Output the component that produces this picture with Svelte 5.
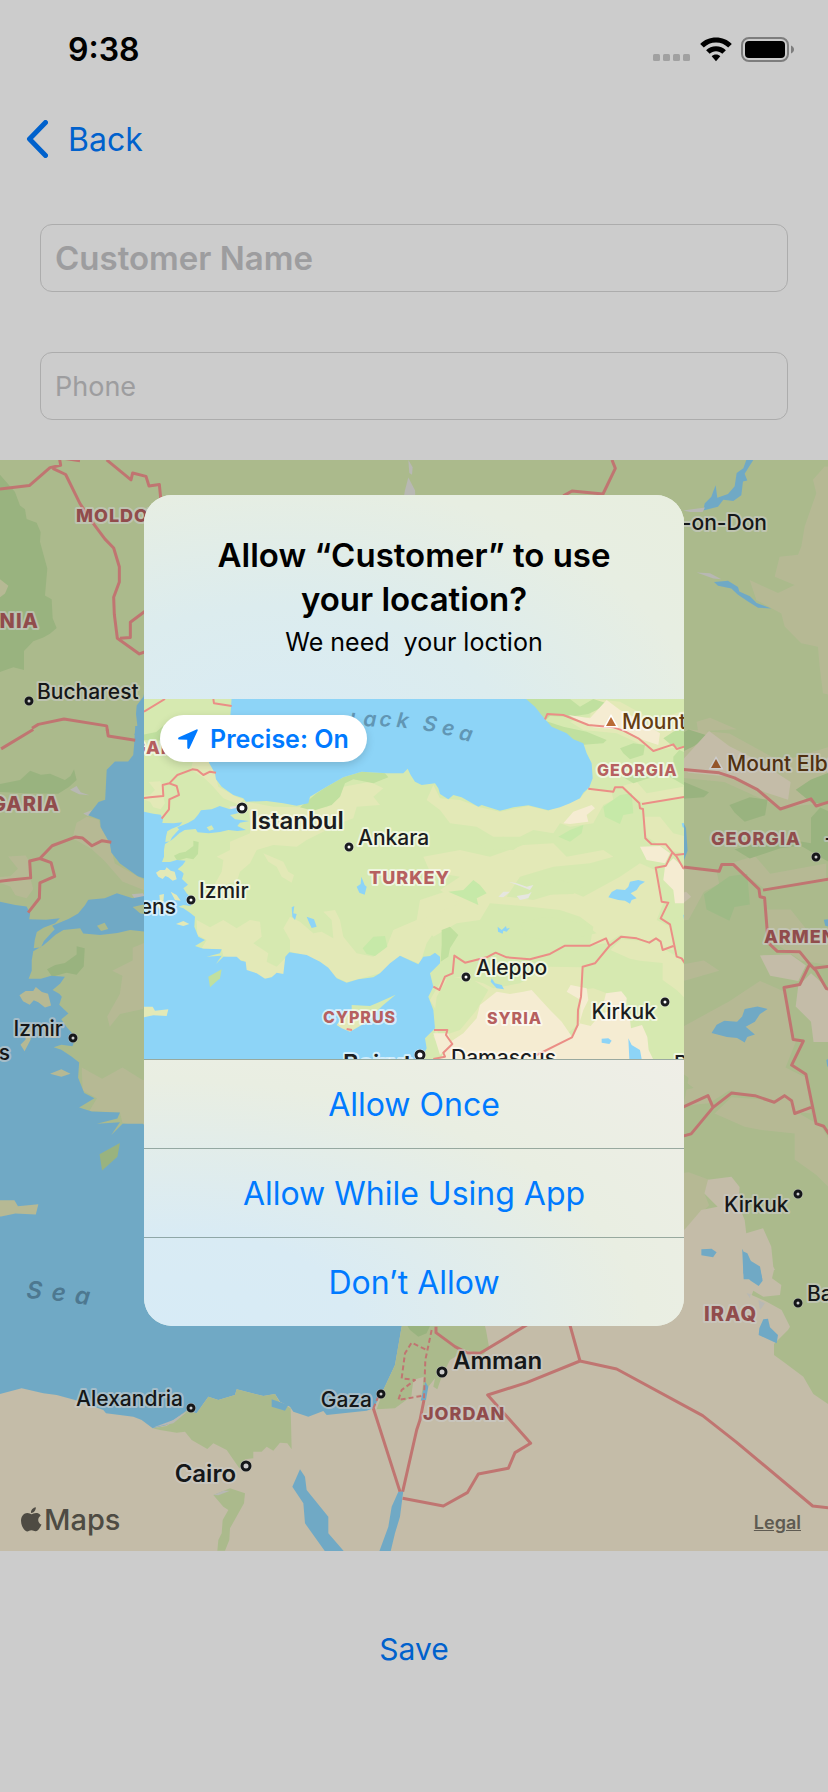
<script>
  let customer = $state('');
  let phone = $state('');

  const mapLabels = [
    { t: 'MOLDOVA', x: 76, y: 62, c: 'country' },
    { t: 'ROMANIA', x: 39, y: 168, c: 'country big end' },
    { t: 'BULGARIA', x: 60, y: 351, c: 'country big end' },
    { t: 'GEORGIA', x: 711, y: 385, c: 'country' },
    { t: 'ARMENIA', x: 764, y: 483, c: 'country' },
    { t: 'IRAQ', x: 704, y: 861, c: 'country big' },
    { t: 'JORDAN', x: 423, y: 960, c: 'country' },
    { t: 'Rostov-on-Don', x: 767, y: 70, c: 'city end' },
    { t: 'Bucharest', x: 37, y: 239, c: 'city', dot: [29, 241] },
    { t: 'Izmir', x: 63, y: 576, c: 'city end', dot: [73, 578] },
    { t: 'Athens', x: 10, y: 600, c: 'city end' },
    { t: 'Mount Elbrus', x: 727, y: 311, c: 'city peak', tri: [716, 304] },
    { t: 'Tbilisi', x: 825, y: 394, c: 'city', dot: [816, 397] },
    { t: 'Kirkuk', x: 724, y: 752, c: 'city', dot: [798, 734] },
    { t: 'Baghdad', x: 807, y: 841, c: 'city', dot: [798, 843] },
    { t: 'Alexandria', x: 183, y: 946, c: 'city end', dot: [191, 948] },
    { t: 'Gaza', x: 372, y: 947, c: 'city end', dot: [381, 934] },
    { t: 'Cairo', x: 236, y: 1022, c: 'city capital end', dot: [246, 1006, 4] },
    { t: 'Amman', x: 453, y: 909, c: 'city capital', dot: [442, 912, 4] }
  ];

  const previewLabels = [
    { t: 'GARIA', x: -12, y: 55, c: 'country' },
    { t: 'TURKEY', x: 225, y: 185, c: 'country' },
    { t: 'GEORGIA', x: 453, y: 77, c: 'country small' },
    { t: 'CYPRUS', x: 179, y: 324, c: 'country small' },
    { t: 'SYRIA', x: 343, y: 325, c: 'country small' },
    { t: 'Istanbul', x: 107, y: 130, c: 'city capital', dot: [98, 109, 4] },
    { t: 'Ankara', x: 214, y: 146, c: 'city', dot: [205, 148] },
    { t: 'Izmir', x: 55, y: 199, c: 'city', dot: [47, 201] },
    { t: 'Athens', x: 32, y: 215, c: 'city end' },
    { t: 'Aleppo', x: 332, y: 276, c: 'city', dot: [322, 278] },
    { t: 'Kirkuk', x: 512, y: 320, c: 'city end', dot: [521, 303] },
    { t: 'Mount', x: 478, y: 30, c: 'city peak', tri: [467, 23] },
    { t: 'Beirut', x: 199, y: 373, c: 'city capital', dot: [276, 356, 4] },
    { t: 'Damascus', x: 307, y: 366, c: 'city' },
    { t: 'Baghdad', x: 530, y: 372, c: 'city' }
  ];
</script>

{#snippet labels(list)}
  {#each list as l}
    <text class={l.c} x={l.x} y={l.y}>{l.t}</text>
    {#if l.dot}
      <circle class="dot-halo" cx={l.dot[0]} cy={l.dot[1]} r={(l.dot[2] ?? 3) + 2} />
      <circle class="dot" cx={l.dot[0]} cy={l.dot[1]} r={l.dot[2] ?? 3} />
    {/if}
    {#if l.tri}
      <path class="tri" d="M{l.tri[0]} {l.tri[1] - 5}l5 9h-10z" />
    {/if}
  {/each}
{/snippet}

<!-- Anatolia and its neighbours, three units to a preview pixel -->
{#snippet anatolia()}
  <path class="land" d="M-10 25H1650V1110H-10z" />
  <path class="forest" d="M-10 138 49 126 69 108 90 116 108 114 137 126 148 118 155 105 160 126 145 140 124 153 60 152 -10 149z" />
  <path class="dry" d="M26 276 60 274 70 290 69 318 75 340 62 358 40 352 30 335 10 328 -10 322V318L30 315 45 300zM160 210 180 198 203 204 207 218 225 250 235 290 292 322 310 328 300 345 250 325 215 285 190 262 152 240z" />
  <path class="urban" d="M147 145 160 138 168 150 185 156 165 154zM173 192 190 185 183 197zM268 350 290 348 296 358 275 360z" />
  <!-- highlands -->
  <path class="dry" d="M320 335 400 350 490 352 560 352 600 320 610 290 690 275 730 295 700 320 720 345 650 350 640 385 600 400 560 420 500 450 470 470 400 465 350 480 330 520 300 545 290 575 245 585 225 610 220 590 245 545 250 510 230 500 270 480 270 455 330 430 330 390zM370 490 430 515 445 545 462 555 455 578 425 560 410 530 385 515z" />
  <path class="dry" d="M170 690 210 712 250 690 290 715 330 690 360 695 365 740 340 760 385 790 380 815 410 830 440 800 435 850 375 866 320 842 312 812 250 798 245 778 185 775 200 750 172 735z" />
  <path class="dry" d="M430 715 450 680 480 695 520 730 545 725 580 745 575 690 550 665 585 660 600 690 610 740 650 790 700 800 740 770 760 720 830 690 840 630 930 600 1010 640 990 660 900 690 880 730 860 760 840 822 780 797 720 850 620 877 585 860 540 815 480 792 450 785 450 750z" />
  <path class="dry" d="M880 285 900 325 960 330 1020 352 1080 365 1165 348 1225 362 1320 325 1345 296 1415 305 1420 330 1390 345 1360 400 1290 410 1260 400 1240 430 1180 420 1140 440 1060 440 1010 410 930 400 900 360 860 330z" />
  <path class="dry" d="M850 500 960 480 1050 500 1150 465 1240 460 1280 500 1390 480 1420 500 1350 520 1240 530 1140 560 1100 620 1180 630 1280 600 1330 620 1440 560 1500 520 1545 540 1570 640 1550 690 1590 710 1600 780 1555 775 1510 750 1440 735 1400 760 1350 765 1360 710 1320 680 1260 660 1170 650 1050 640 1020 690 950 700 880 740 840 690 960 640 900 600 960 560 870 545z" />
  <path class="land" d="M1010 455 1090 440 1150 460 1120 480 1040 478zM1170 600 1260 570 1330 590 1300 612 1200 615zM1140 700 1220 680 1330 700 1370 730 1250 755 1160 740z" />
  <path class="dry" d="M1360 27 1440 35 1540 90 1640 60 1640 170 1540 180 1430 130 1330 120 1290 95 1350 80zM1440 290 1490 275 1520 310 1630 290 1630 325 1510 340zM1510 380 1560 380 1600 430 1640 440 1640 490 1580 480 1520 440z" />
  <path class="forest" d="M1155 27H1290L1320 50 1360 27 1400 40 1370 60 1345 72 1290 80 1230 78 1215 92 1270 110 1340 125 1400 150 1390 160 1320 165 1240 120 1205 92zM1440 175 1480 160 1515 165 1510 195 1470 208 1450 190zM1570 145 1600 125 1640 110V175L1600 170zM1600 200 1618 180 1640 190V290L1580 255 1540 260 1480 280 1450 262 1540 240 1600 250z" />
  <path class="cream" d="M1285 75 1350 85 1400 30 1440 60 1490 85 1560 130 1555 165 1510 150 1450 120 1360 112z" />
  <path class="forest" d="M480 352 530 310 560 290 610 262 665 245 735 250 745 262 700 280 640 268 615 280 600 320 575 345 520 362zM102 497 118 489 137 485 160 468 160 452 176 456 174 492 160 508 140 504 112 512zM905 720 930 710 955 735 930 775 925 800 902 815 905 765z" />
  <path class="mint" d="M668 775 700 740 735 738 742 770 705 798 680 792zM925 605 970 600 1000 570 1020 585 1040 610 1010 625 1015 645 960 620zM1390 350 1440 315 1475 310 1480 370 1450 375 1440 402 1395 380zM1255 440 1290 420 1330 405 1325 430 1290 455z" />
  <path class="cream" d="M1270 400 1300 365 1355 345 1365 355 1340 375 1345 395 1290 402zM1500 470 1560 468 1590 490 1575 520 1520 510zM1575 530 1600 505 1640 540V640L1605 640 1600 600 1570 570z" />
  <!-- steppe and desert -->
  <path class="dry" d="M905 870 960 860 1030 880 1060 895 1140 880 1230 830 1325 832 1320 1000 1220 1080 920 1107 880 1040 900 980 870 930zM1320 900 1360 895 1400 910 1391 937 1400 960 1360 1000 1350 1060 1320 1107zM1411 780 1444 748 1500 752 1560 770 1620 805 1640 840V930L1610 900 1568 870V819L1500 812 1470 806z" />
  <path class="land" d="M925 860 1000 870 1045 900 1010 960 960 1020 900 1040 880 1000 890 920zM1590 700 1610 680 1640 700V800L1620 790z" />
  <path class="cream" d="M900 1110 925 1060 970 1030 1010 985 1020 945 1070 905 1110 912 1150 905 1175 900 1230 960 1265 995 1296 1040 1320 1000 1322 930 1280 905 1292 885 1340 895 1345 930 1330 960 1318 1000 1352 1008 1385 969 1417 963 1391 937 1398 910 1444 904 1460 924 1458 960 1470 989 1473 1015 1506 1005 1522 1041 1526 1080 1542 1113zM880 1030 925 1030 935 1062 900 1095z" />
  <!-- seas -->
  <path class="water" d="M275 20 273 54 271 77 261 90 235 90 219 106 216 165 203 169 183 195 206 204 207 218 225 250 228 268 245 290 280 315 310 325 318 335 380 333 430 340 470 347 505 340 510 320 560 290 610 262 665 245 740 250 790 250 803 236 812 255 825 275 845 285 885 280 895 295 900 312 925 328 940 315 965 322 1015 350 1025 345 1080 362 1120 352 1165 346 1225 361 1260 352 1290 340 1320 325 1330 308 1348 292 1358 265 1355 220 1340 190 1330 160 1300 148 1280 130 1235 110 1210 82 1185 50 1150 20z" />
  <path class="water" d="M300 352 270 358 239 348 215 358 183 361 176 372 163 388 145 398 131 404 112 412 118 420 134 420 167 417 173 427 206 430 240 426 265 420 292 423 318 420 292 408 300 398 328 393 285 388 270 375 300 368z" />
  <path class="water" d="M-10 365 10 365 40 371 62 374 69 388 67 399 100 400 127 397 118 407 95 416 82 424 78 440 76 456 90 454 96 442 112 424 124 412 134 420 118 430 105 442 95 450 75 462 72 480 72 500 66 516 90 516 110 510 137 512 128 525 113 538 126 545 131 551 126 567 144 584 130 595 140 610 158 630 152 648 130 645 115 650 130 655 150 668 165 680 163 710 175 740 195 750 165 768 190 776 245 778 240 790 200 800 245 797 228 822 250 800 290 800 303 812 317 815 320 840 350 850 375 866 395 862 410 848 430 852 436 800 448 787 500 795 540 815 565 833 590 865 620 878 655 868 700 862 720 850 750 820 780 797 835 823 850 800 870 798 885 788 900 800 900 820 870 850 880 890 865 920 880 960 885 1015 855 1045 860 1075 840 1115H-10z" />
  <path class="dry" d="M48 548 60 540 75 540 80 532 92 542 104 545 110 568 98 572 85 562 76 558 68 567 55 560zM92 605 110 615 122 632 105 630zM58 615 72 612 70 635 58 658 50 645 60 635zM108 702 130 693 148 702 130 708zM-10 950 38 950 45 962 85 958 80 978 40 976 12 982 -10 980zM590 1005 605 985 635 962 690 950 700 965 690 990 660 1008 630 1025 605 1015z" />
  <path class="land" d="M200 412 215 406 222 418 208 422zM605 985 635 962V945L690 948 720 935 767 914 730 945 705 968 680 970 640 975z" />
  <path class="forest" d="M205 860 245 838 240 865 210 892z" />
  <path class="water" d="M650 590 662 582 664 560 674 585 680 590 674 614 658 608zM455 652 463 648 460 670 470 672 465 690 457 680zM500 680 522 688 530 710 515 714 508 700zM1405 622 1415 606 1430 598 1455 600 1465 590 1470 575 1495 570 1515 575 1500 585 1490 600 1472 610 1490 625 1475 630 1470 641 1455 632 1435 630zM1073 710 1085 720 1098 708 1100 716 1110 713 1100 725 1090 722 1088 731 1074 725zM1055 865 1065 880 1085 885 1092 898 1070 895 1052 875zM1385 1046 1405 1045 1415 1052 1408 1062 1385 1058zM1465 1045 1475 1065 1500 1080 1505 1107 1468 1107zM1625 400 1640 398V415L1628 412zM1630 675 1640 670V690L1632 688z" />
  <path class="urban" d="M1075 620 1090 605 1110 605 1090 622zM1105 575 1130 580 1160 590 1180 585 1170 600 1140 588zM1130 618 1165 612 1175 605 1165 625 1140 630z" />
  <g class="borders">
    <path d="M12 65 75 27M220 27 222 40 275 48M-10 327 30 322 70 318 68 285 88 280 112 255 157 238 172 240 190 255 210 245 228 248M88 280 110 288 117 315 88 328 87 358 65 386" />
    <path d="M1215 88 1222 72 1270 75 1345 105 1420 112 1450 122 1495 145 1540 183 1600 163 1610 177 1645 166M1345 296 1420 305 1425 292 1448 292 1498 340 1500 355 1509 357 1516 445 1534 462 1578 463 1600 490 1610 500 1630 535 1650 540M1506 342 1650 318M1605 495 1650 490" />
    <path d="M1597 488 1578 527 1547 533 1565 635 1585 638 1562 685 1590 703 1610 800 1625 805 1645 835M1600 768 1568 780 1562 755 1548 745 1528 758 1490 745 1444 740 1408 768 1398 745 1350 767 1275 767 1230 792 1170 808 1100 802 1067 788 1040 802 975 818 943 797 938 850 915 860 898 900 880 890M1408 768 1365 820 1328 830 1323 920 1314 960 1313 1005 1296 1042 1190 1095M882 1020 922 1020 918 1035 937 1062 910 1088 915 1100 880 1107M620 1017 636 1020" />
  </g>
{/snippet}

<main class="page">
  <header class="status">
    <time>9:38</time>
    <div class="status-icons">
      <svg class="cell" viewBox="0 0 38 25" aria-hidden="true">
        <rect x="0" y="17" width="7" height="7" rx="1.500" />
        <rect x="10" y="17" width="7" height="7" rx="1.500" />
        <rect x="20" y="17" width="7" height="7" rx="1.500" />
        <rect x="30" y="17" width="7" height="7" rx="1.500" />
      </svg>
      <svg class="wifi" viewBox="0 0 32 25" aria-hidden="true">
        <path d="M16 0.500C9.800.5 4.200 2.900.2 6.900l3.600 3.700C7 7.500 11.200 5.600 16 5.600s9 1.900 12.200 5l3.600-3.700C27.800 2.900 22.200.5 16 .5z" />
        <path d="M16 9.200c-3.900 0-7.300 1.500-9.900 4l3.600 3.600c1.700-1.600 3.800-2.500 6.300-2.500s4.600.9 6.300 2.500l3.600-3.600c-2.600-2.500-6-4-9.900-4z" />
        <path d="M16 17.600c-1.700 0-3.200.7-4.300 1.700L16 24.200l4.300-4.900c-1.100-1-2.600-1.700-4.300-1.700z" />
      </svg>
      <svg class="battery" viewBox="0 0 54 25" aria-hidden="true">
        <rect x="1" y="1" width="46" height="23" rx="7" fill="none" stroke="#9d9d9d" stroke-width="2" />
        <rect x="4" y="4" width="40" height="17" rx="4" />
        <path d="M50 8.500c4 1.500 4 6.500 0 8z" fill="#9d9d9d" />
      </svg>
    </div>
  </header>

  <nav class="nav">
    <button class="back">
      <svg viewBox="0 0 22 38" aria-hidden="true"><path d="M19.500 2.500 3.500 19l16 16.500" /></svg>
      <span>Back</span>
    </button>
  </nav>

  <form class="form">
    <input class="name" aria-label="Customer Name" placeholder="Customer Name" bind:value={customer} />
    <input class="phone" type="tel" aria-label="Phone" placeholder="Phone" bind:value={phone} />
  </form>

  <section class="map" aria-label="Map">
    <svg class="canvas" viewBox="0 0 828 1091">
      <path class="land" d="M0 0H828V1091H0z" />
      <g transform="translate(-5 255.700) scale(.51)">{@render anatolia()}</g>

      <g transform="translate(0 -10) scale(.33333 .38265)">
        <path class="forest" d="M0 65 45 110 60 145 75 155 80 180 110 190 122 215 120 240 142 310 135 380 155 390 158 440 170 465 150 480 130 490 100 500 72 525 72 575 40 568 0 580z" />
        <path class="dry" d="M0 338 25 355 15 375 0 385zM2474 43 2439 78 2449 113 2414 200 2404 252 2394 274 2339 279 2324 331 2384 353 2334 374 2249 340 2269 392 2344 427 2354 461 2404 505 2454 514 2459 566 2469 636 2490 640V43zM2094 735 2090 710 2130 700 2210 730z" />
        <path class="water" d="M440 610 430 645 410 668 408 690 412 720 403 745H1752L1600 600z" />
        <path class="water" d="M2239 26 2230 48 2210 60 2204 95 2184 115 2152 125 2147 92 2139 110 2134 122 2114 140 2110 158 2154 148 2170 130 2200 133 2224 118 2229 82 2242 80 2234 62 2260 26zM2142 345 2184 342 2214 358 2218 370 2250 382 2270 400 2314 414 2274 412 2244 396 2214 378 2194 362 2154 355z" />
        <path class="urban" d="M1225 26 1238 45 1236 65 1228 60zM1225 72 1245 105 1246 120H1212L1215 105zM2050 158 2115 150 2108 162 2070 162zM2090 320 2130 322 2164 338 2140 336z" />
        <g class="borders">
          <path d="M0 102 88 93 150 46 182 40 178 20 240 28M158 48 197 64 240 140 278 190 315 233 341 256 358 305 358 345 341 385 343 430 352 492 418 533 440 526M320 26 393 78 398 60 438 69 447 94 478 90 482 125M360 492 391 490 391 450 440 418M96 727 115 717 192 703 320 721 323 738M1836 26 1846 48 1809 115 1716 107 1690 120" />
        </g>
      </g>

      <g transform="translate(0 580) scale(.33333)">
        <path class="cream" d="M0 718H2484V1540H0z" />
        <path class="water" d="M0 715V1062L65 1045 130 1060 170 1065 225 1080 310 1110 318 1120 400 1130 425 1140 458 1165 500 1155 560 1112 590 1120 625 1070 655 1080 705 1065 710 1048 790 1068 825 1062 840 1085 870 1100 880 1115 925 1130 970 1113 980 1125 1100 1112 1120 1105 1150 1050 1185 975 1205 860 1222 800 1270 715z" />
        <path class="land" d="M458 1165 500 1158 560 1112 590 1120 625 1070 655 1080 705 1065 710 1048 790 1068 825 1062 838 1085 872 1105 875 1228 862 1210 840 1208 820 1232 800 1220 785 1235 760 1235V1255L735 1258 718 1285 680 1230 640 1210 622 1227 575 1200 555 1175 530 1178 480 1170zM640 1365 690 1345 735 1360 732 1390 690 1465 688 1500 675 1532H652L655 1500 665 1480 668 1440 685 1410 670 1400z" />
        <path class="land" d="M1205 860 1225 800H1440L1458 870 1467 920 1450 945 1400 930 1350 960 1325 1010 1312 1048 1300 1040 1305 1015 1285 1040 1275 1060 1232 1070 1185 1105 1130 1108 1150 1050 1185 975z" />
        <path class="cream" d="M1240 1020 1272 1010 1265 1062 1234 1070z" />
        <path class="forest" d="M1222 857H1290L1280 880 1255 890 1230 870z" />
        <path class="land" d="M2316 715 2322 690 2484 690V1092L2440 1062 2410 1010 2350 965 2322 945V912L2364 870 2370 860 2345 810 2300 785 2255 765 2260 752 2290 770 2340 765 2344 735z" />
        <path class="water" d="M815 1078 865 1095 855 1112 830 1105 815 1100zM900 1288 915 1310 920 1350 985 1430 985 1480 1032 1534H975L915 1450 910 1390 877 1340zM1210 1352 1200 1430 1185 1480 1172 1534H1138L1165 1460 1175 1400 1195 1355zM1276 1025 1285 1040 1278 1080 1262 1082zM2232 635 2242 640 2258 675 2278 680 2288 722 2276 738 2252 722 2230 700zM2290 838 2304 836 2310 862 2334 885 2330 910 2276 885 2278 865z" />
        <path class="urban" d="M640 1365 670 1352 690 1352 655 1366zM458 1163 520 1140 570 1108 520 1150zM2240 760 2252 762 2250 775zM2275 780 2295 790 2280 810z" />
        <g class="borders">
          <path d="M1120 1105 1200 1355M1208 1355 1250 1170 1260 1140 1272 1080M1308 860V878L1365 920 1400 938 1440 940 1600 843M1700 820 1740 963 1580 1028 1463 1065 1592 1210 1545 1238 1525 1285 1435 1302 1402 1358 1330 1398 1208 1375M1740 963 1850 987 2108 1127 2210 1207 2438 1398 2500 1405" />
          <path class="dash" d="M1120 1105 1135 1070M1264 1068 1195 1080 1205 1050 1245 1020 1205 1015 1215 940 1235 908 1280 930M1272 1075 1276 960 1295 870" />
        </g>
      </g>

      {@render labels(mapLabels)}
      <text class="sea wide" x="26 51 74" y="838 840 843" rotate="4 6 8">Sea</text>
    </svg>
    <div class="brand">
      <svg viewBox="0 0 21 25" aria-hidden="true">
        <path d="M14.800.2c.2 1.500-.4 2.900-1.300 4-.9 1.100-2.200 1.800-3.500 1.700-.2-1.400.5-2.900 1.300-3.800.9-1 2.400-1.800 3.500-1.900zM19.700 8.700c-1.500.9-2.500 2.400-2.500 4.200 0 2.100 1.300 3.900 3.300 4.600-.4 1.300-1.100 2.500-1.900 3.600-1.100 1.600-2.200 3.200-4 3.200-1.700 0-2.200-1-4.200-1s-2.600 1-4.200 1.100c-1.700.1-3-1.700-4.100-3.300C.1 17.800-1 12.300 1.300 8.900c1.100-1.700 3-2.800 5.100-2.800 1.700 0 3.200 1.100 4.200 1.100s2.900-1.400 4.900-1.200c.8 0 3.100.3 4.200 2.700z" />
      </svg>
      <span>Maps</span>
    </div>
    <a class="legal" href="#legal">Legal</a>
  </section>

  <footer class="footer"><button class="save">Save</button></footer>

  <div class="overlay">
    <div class="alert" role="alertdialog" aria-modal="true" aria-labelledby="alert-title" aria-describedby="alert-text">
      <div class="alert-head">
        <h1 id="alert-title">Allow “Customer” to use your location?</h1>
        <p id="alert-text">We need&nbsp; your loction</p>
      </div>
      <div class="preview">
        <svg class="canvas" viewBox="0 0 540 360" aria-label="Map preview">
          <g transform="translate(-4 -9) scale(.33333)">{@render anatolia()}</g>
          <text class="sea" x="184 205 219 235 252" y="32 29 27 27 28" rotate="0 2 3 4 6">Black</text>
          <text class="sea" x="278 297 314" y="31 35 40" rotate="9 11 13">Sea</text>
          {@render labels(previewLabels)}
        </svg>
        <button class="precise">
          <svg viewBox="0 0 20 20" aria-hidden="true"><path d="M18.500.4 1 8.300c-1.400.7-1 2.300.4 2.300l7.800.1.1 7.900c0 1.500 1.700 1.800 2.300.4l8-17.300C20.100.6 19.400 0 18.500.4z" /></svg>
          <span>Precise: On</span>
        </button>
      </div>
      <div class="actions">
        <button>Allow Once</button>
        <button>Allow While Using App</button>
        <button>Don’t Allow</button>
      </div>
    </div>
  </div>
</main>

<style>
  :global(body) {
    margin: 0;
    background: #ccc;
  }
  .page {
    position: relative;
    display: flex;
    flex-direction: column;
    min-height: 100vh;
    background: #fff;
    font-family: Inter, 'Liberation Sans', sans-serif;
    color: #000;
  }
  button {
    border: 0;
    padding: 0;
    background: none;
    font: inherit;
    color: #007aff;
    cursor: pointer;
  }
  svg {
    display: block;
    flex: none;
  }

  .status {
    display: flex;
    align-items: center;
    justify-content: space-between;
    height: 98px;
    padding: 0 33px 0 68px;
  }
  .status time {
    font-size: 32px;
    font-weight: 600;
  }
  .status-icons {
    display: flex;
    align-items: center;
    gap: 9px;
  }
  .cell {
    width: 38px;
    height: 25px;
    fill: #cacaca;
  }
  .wifi {
    width: 32px;
    height: 25px;
  }
  .battery {
    width: 54px;
    height: 25px;
  }

  .nav {
    display: flex;
    align-items: center;
    height: 82px;
    padding: 0 26px;
  }
  .back {
    display: flex;
    align-items: center;
    gap: 20px;
    font-size: 32px;
  }
  .back svg {
    width: 22px;
    height: 38px;
    fill: none;
    stroke: #007aff;
    stroke-width: 5;
    stroke-linecap: round;
    stroke-linejoin: round;
  }

  .form {
    display: flex;
    flex-direction: column;
    gap: 60px;
    padding: 44px 40px 40px;
  }
  input {
    box-sizing: border-box;
    width: 100%;
    height: 68px;
    padding: 0 14px;
    border: 1px solid #d8d8d8;
    border-radius: 12px;
    background: transparent;
    font: inherit;
  }
  input::placeholder {
    color: #c5c5c7;
    opacity: 1;
  }
  .name {
    font-size: 33px;
    font-weight: 600;
  }
  .phone {
    font-size: 27px;
  }

  .map {
    position: relative;
  }
  .canvas {
    width: 100%;
    height: auto;
  }
  .land { fill: #d6e9b0; }
  .dry { fill: #e3e9b7; }
  .forest { fill: #c0e09f; }
  .mint { fill: #c6e9a8; }
  .cream { fill: #f5ecd2; }
  .water { fill: #8dd4f7; }
  .urban { fill: #e6e6e0; }
  .map .dry { fill: #e4e8ba; }
  .borders path {
    fill: none;
    stroke: #eb8e86;
    stroke-width: 2;
    stroke-linejoin: round;
    vector-effect: non-scaling-stroke;
  }
  .map .borders path {
    stroke: #f0938e;
    stroke-width: 3;
  }
  .map .borders .dash {
    stroke-width: 2;
    stroke-dasharray: 5 3;
  }
  text {
    paint-order: stroke;
    stroke: rgb(255 255 255 / 0.6);
    stroke-width: 4px;
    stroke-linejoin: round;
  }
  .city {
    font-size: 21px;
    font-weight: 500;
    fill: #1b1d20;
  }
  .capital {
    font-size: 24px;
    font-weight: 600;
  }
  .peak {
    fill: #643d14;
  }
  .country {
    font-size: 18px;
    font-weight: 800;
    letter-spacing: 1px;
    fill: #b6605f;
  }
  .big {
    font-size: 20px;
  }
  .small {
    font-size: 16px;
  }
  .end {
    text-anchor: end;
  }
  .sea {
    font-size: 21px;
    font-style: italic;
    font-weight: 600;
    fill: #6196b4;
    stroke: none;
  }
  .wide {
    font-size: 24px;
  }
  .dot {
    fill: #fff;
    stroke: #1b1d20;
    stroke-width: 3px;
  }
  .dot-halo {
    fill: rgb(255 255 255 / 0.7);
  }
  .tri {
    fill: #b96b36;
    stroke: #fff;
    stroke-width: 3px;
    paint-order: stroke;
  }
  .brand {
    position: absolute;
    left: 21px;
    bottom: 14px;
    display: flex;
    align-items: center;
    gap: 2px;
    font-size: 29px;
    font-weight: 500;
    color: #625e54;
  }
  .brand svg {
    width: 21px;
    height: 25px;
    fill: currentColor;
  }
  .legal {
    position: absolute;
    right: 27px;
    bottom: 18px;
    font-size: 18px;
    font-weight: 600;
    color: #777267;
  }

  .footer {
    display: flex;
    flex: 1;
    justify-content: center;
    align-items: flex-start;
    padding: 80px 0;
  }
  .save {
    font-size: 30px;
  }

  .overlay {
    position: absolute;
    inset: 0;
    display: grid;
    place-items: center;
    padding-top: 29px;
    background: rgb(0 0 0 / 0.2);
  }
  .alert {
    width: min(540px, 90%);
    border-radius: 28px;
    overflow: hidden;
    background: #e8eee2;
  }
  .alert-head {
    padding: 38px 64px 36px;
    background: radial-gradient(ellipse at 25% 125%, #d8ebf5 0%, #dcecee 40%, #e7eee2 75%, #e8eedf 100%);
    text-align: center;
  }
  h1 {
    margin: 0;
    font-size: 33px;
    font-weight: 600;
    line-height: 44px;
  }
  p {
    margin: 0;
    font-size: 25px;
    line-height: 42px;
  }
  .preview {
    position: relative;
  }
  .precise {
    position: absolute;
    left: 16px;
    top: 16px;
    display: flex;
    align-items: center;
    gap: 12px;
    height: 47px;
    padding: 0 18px;
    border-radius: 24px;
    background: #fff;
    box-shadow: 0 3px 8px rgb(0 0 0 / 0.15);
    font-size: 25px;
    font-weight: 600;
  }
  .precise svg {
    width: 20px;
    height: 20px;
    fill: currentColor;
  }
  .actions {
    display: grid;
    background: radial-gradient(ellipse at 5% 100%, #d7ebf6 0%, #d9ebf4 25%, #e9eee2 65%, #efeee7 100%);
  }
  .actions button {
    height: 89px;
    border-top: 1px solid rgb(70 100 90 / 0.5);
    font-size: 32px;
  }
</style>
